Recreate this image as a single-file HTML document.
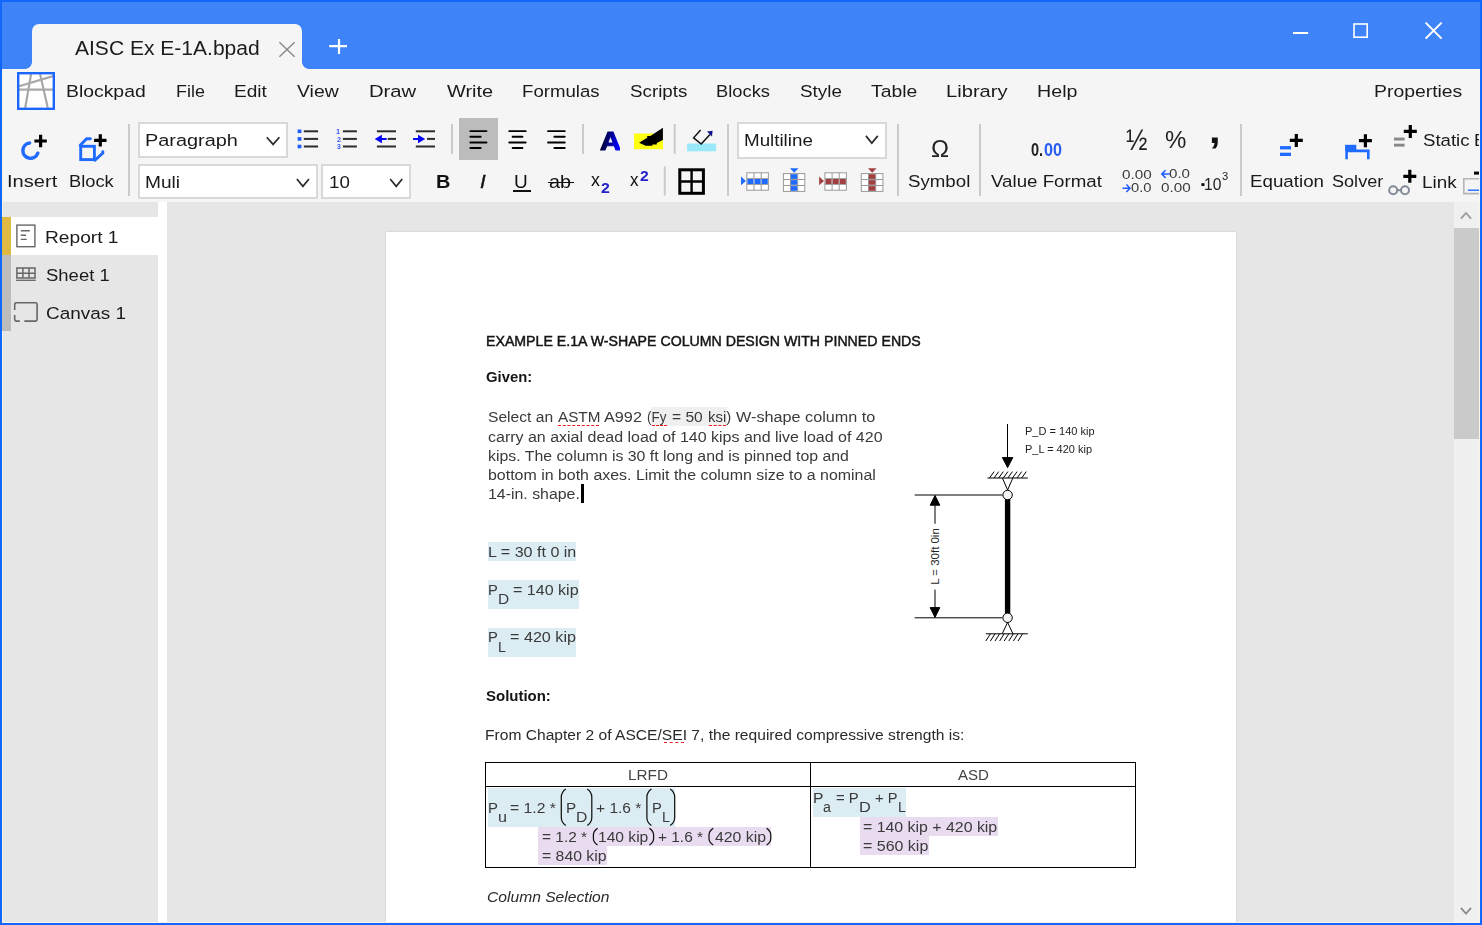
<!DOCTYPE html>
<html lang="en"><head><meta charset="utf-8"><title>AISC Ex E-1A.bpad - Blockpad</title>
<style>
html,body{margin:0;padding:0}
body{width:1482px;height:925px;overflow:hidden;position:relative;background:#e6e6e6;font-family:"Liberation Sans",sans-serif;}
.t{position:absolute;white-space:nowrap;line-height:1;transform-origin:0 0;}
.frame{position:absolute;left:0;top:0;width:1478px;height:921px;border:2px solid #1166fb;z-index:50;pointer-events:none}
.cream{position:absolute;background:#fbf3e4;z-index:49}
.titlebar{position:absolute;left:0;top:0;width:1482px;height:69px;background:#3f83f8}
.tab{position:absolute;left:32px;top:24px;width:270px;height:46px;background:#f5f5f5;border-radius:7px 7px 0 0}
.tab .cl,.tab .cr{position:absolute;bottom:1px;width:7px;height:7px}
.tab .cl{left:-7px;background:radial-gradient(circle at 0 0,rgba(245,245,245,0) 6.5px,#f5f5f5 7.2px)}
.tab .cr{right:-7px;background:radial-gradient(circle at 100% 0,rgba(245,245,245,0) 6.5px,#f5f5f5 7.2px)}
.ribbon{position:absolute;left:0;top:69px;width:1482px;height:133px;background:#f5f5f5}
.logo{position:absolute;left:17px;top:72px;width:38px;height:38px;line-height:0}
.combo{position:absolute;box-sizing:border-box;background:#fff;border:2px solid #d9d9d9}
.selbtn{position:absolute;left:459px;top:118px;width:39px;height:42px;background:#bcbcbc}
.ln{position:absolute;background:#111}
.clipr{position:absolute;left:0;top:0;width:1479px;height:202px;overflow:hidden}
.sidebar{position:absolute;left:0;top:202px;width:158px;height:723px;background:#e6e6e6}
.splitter{position:absolute;left:158px;top:202px;width:9px;height:723px;background:#fff}
.siderow{position:absolute;left:11px;top:217px;width:147px;height:38px;background:#fff}
.ybar{position:absolute;left:2px;top:217px;width:9px;height:38px;background:#e1b941}
.gbar{position:absolute;left:2px;top:255px;width:9px;height:76px;background:#bcbcbc}
.vscroll{position:absolute;left:1454px;top:202px;width:26px;height:721px;background:#f0f0f0}
.thumb{position:absolute;left:0;top:26px;width:26px;height:211px;background:#cacaca}
.page{position:absolute;left:386px;top:232px;width:850px;height:693px;background:#fff;box-shadow:0 0 1.5px rgba(0,0,0,.18)}
.fbg{position:absolute}
.caret{position:absolute;left:580.5px;top:484px;width:3px;height:18.5px;background:#000}
.sq{position:absolute;height:0;border-top:1.3px dashed #ee1c1c}
.tbl{position:absolute;left:485px;top:762px;width:651px;height:106px;box-sizing:border-box;border:1px solid #000}
.tbl .tv{position:absolute;left:324px;top:0;width:1px;height:100%;background:#000}
.tbl .th{position:absolute;left:0;top:23px;width:100%;height:1px;background:#000}
svg.ov{position:absolute;left:0;top:0;z-index:10}
</style></head>
<body>
<div class="sidebar"></div><div class="splitter"></div>
<div class="cream" style="left:2px;top:202px;width:1px;height:721px;z-index:auto"></div>
<div class="siderow"></div><div class="ybar"></div><div class="gbar"></div>
<span class="t" style="left:44.90px;top:229px;font-size:17.33px;transform:scaleX(1.1054);color:#1a1a1a;">Report 1</span>
<span class="t" style="left:45.82px;top:267px;font-size:17.33px;transform:scaleX(1.0667);color:#1a1a1a;">Sheet 1</span>
<span class="t" style="left:45.51px;top:305px;font-size:17.33px;transform:scaleX(1.0935);color:#1a1a1a;">Canvas 1</span>
<div class="vscroll"><div class="thumb"></div></div>
<div class="page"></div>
<span class="t" style="left:485.55px;top:335px;font-size:13.89px;transform:scaleX(1.0204);color:#151515;-webkit-text-stroke:0.45px #151515;">EXAMPLE E.1A W-SHAPE COLUMN DESIGN WITH PINNED ENDS</span>
<span class="t" style="left:486.10px;top:371px;font-size:13.89px;transform:scaleX(1.0690);font-weight:700;color:#151515;">Given:</span>
<div class="fbg" style="left:651px;top:407px;width:76px;height:19px;background:#efefef"></div>
<span class="t" style="left:488.10px;top:411px;font-size:13.89px;transform:scaleX(1.1251);color:#3a3a3a;">Select an</span>
<span class="t" style="left:558.10px;top:411px;font-size:13.89px;transform:scaleX(1.1001);color:#3a3a3a;">ASTM</span>
<span class="t" style="left:604.20px;top:411px;font-size:13.89px;transform:scaleX(1.1707);color:#3a3a3a;">A992</span>
<span class="t" style="left:646.91px;top:411px;font-size:13.89px;transform:scaleX(0.9670);color:#3a3a3a;">(Fy</span>
<span class="t" style="left:672.30px;top:411px;font-size:13.89px;transform:scaleX(1.1235);color:#3a3a3a;">= 50</span>
<span class="t" style="left:707.96px;top:411px;font-size:13.89px;transform:scaleX(1.0747);color:#3a3a3a;">ksi)</span>
<span class="t" style="left:736.20px;top:411px;font-size:13.89px;transform:scaleX(1.1677);color:#3a3a3a;">W-shape column to</span>
<span class="t" style="left:488.15px;top:431px;font-size:13.89px;transform:scaleX(1.1520);color:#3a3a3a;">carry an axial dead load of 140 kips and live load of 420</span>
<span class="t" style="left:487.80px;top:450px;font-size:13.89px;transform:scaleX(1.1421);color:#3a3a3a;">kips. The column is 30 ft long and is pinned top and</span>
<span class="t" style="left:487.80px;top:469px;font-size:13.89px;transform:scaleX(1.1481);color:#3a3a3a;">bottom in both axes. Limit the column size to a nominal</span>
<span class="t" style="left:488.45px;top:488px;font-size:13.89px;transform:scaleX(1.1451);color:#3a3a3a;">14-in. shape.</span>
<div class="caret"></div>
<div class="sq" style="left:557.9px;top:424.6px;width:41.4px"></div>
<div class="sq" style="left:651.9px;top:424.6px;width:15.1px"></div>
<div class="sq" style="left:708.8px;top:424.6px;width:17.2px"></div>
<div class="fbg" style="left:488px;top:542px;width:88px;height:19px;background:#dcecf3"></div>
<span class="t" style="left:487.60px;top:546px;font-size:13.89px;transform:scaleX(1.1582);color:#3a3a3a;">L = 30 ft 0 in</span>
<div class="fbg" style="left:488px;top:580px;width:91px;height:29px;background:#dcecf3"></div>
<span class="t" style="left:488.01px;top:584px;font-size:13.89px;transform:scaleX(1.0622);color:#3a3a3a;">P</span>
<span class="t" style="left:498.35px;top:593px;font-size:13.89px;transform:scaleX(1.1152);color:#3a3a3a;">D</span>
<span class="t" style="left:512.98px;top:584px;font-size:13.89px;transform:scaleX(1.1565);color:#3a3a3a;">= 140 kip</span>
<div class="fbg" style="left:488px;top:628px;width:88px;height:29px;background:#dcecf3"></div>
<span class="t" style="left:488.01px;top:631px;font-size:13.89px;transform:scaleX(1.0622);color:#3a3a3a;">P</span>
<span class="t" style="left:498.44px;top:641px;font-size:13.89px;transform:scaleX(1.0343);color:#3a3a3a;">L</span>
<span class="t" style="left:509.77px;top:631px;font-size:13.89px;transform:scaleX(1.1637);color:#3a3a3a;">= 420 kip</span>
<span class="t" style="left:486.30px;top:690px;font-size:13.89px;transform:scaleX(1.0790);font-weight:700;color:#151515;">Solution:</span>
<span class="t" style="left:485.44px;top:729px;font-size:13.89px;transform:scaleX(1.1241);color:#2a2a2a;">From Chapter 2 of ASCE/SEI 7, the required compressive strength is:</span>
<div class="sq" style="left:663.9px;top:742.4px;width:20.2px"></div>
<div class="tbl"><div class="tv"></div><div class="th"></div></div>
<span class="t" style="left:628.16px;top:769px;font-size:13.89px;transform:scaleX(1.1018);color:#444;">LRFD</span>
<span class="t" style="left:958.20px;top:769px;font-size:13.89px;transform:scaleX(1.0859);color:#444;">ASD</span>
<div class="fbg" style="left:488px;top:788.4px;width:187px;height:38.3px;background:#dcecf3"></div>
<div class="fbg" style="left:538.3px;top:826.7px;width:232.8px;height:19.1px;background:#e9dcf1"></div>
<div class="fbg" style="left:538.3px;top:845.7px;width:68.7px;height:19px;background:#e9dcf1"></div>
<span class="t" style="left:488.09px;top:802px;font-size:13.89px;transform:scaleX(1.0756);color:#3a3a3a;">P</span>
<span class="t" style="left:498.38px;top:811px;font-size:13.89px;transform:scaleX(1.1621);color:#3a3a3a;">u</span>
<span class="t" style="left:510.19px;top:802px;font-size:13.89px;transform:scaleX(1.1342);color:#3a3a3a;">= 1.2 *</span>
<span class="t" style="left:565.56px;top:802px;font-size:13.89px;transform:scaleX(1.1025);color:#3a3a3a;">P</span>
<span class="t" style="left:575.93px;top:811px;font-size:13.89px;transform:scaleX(1.1273);color:#3a3a3a;">D</span>
<span class="t" style="left:596.30px;top:802px;font-size:13.89px;transform:scaleX(1.1191);color:#3a3a3a;">+ 1.6 *</span>
<span class="t" style="left:651.91px;top:802px;font-size:13.89px;transform:scaleX(1.0622);color:#3a3a3a;">P</span>
<span class="t" style="left:662.04px;top:811px;font-size:13.89px;transform:scaleX(1.0343);color:#3a3a3a;">L</span>
<span class="t" style="left:541.90px;top:831px;font-size:13.89px;transform:scaleX(1.1141);color:#3a3a3a;">= 1.2 *</span>
<span class="t" style="left:598.28px;top:831px;font-size:13.89px;transform:scaleX(1.1237);color:#3a3a3a;">140 kip</span>
<span class="t" style="left:658.11px;top:831px;font-size:13.89px;transform:scaleX(1.1116);color:#3a3a3a;">+ 1.6 *</span>
<span class="t" style="left:714.54px;top:831px;font-size:13.89px;transform:scaleX(1.1402);color:#3a3a3a;">420 kip</span>
<span class="t" style="left:541.89px;top:850px;font-size:13.89px;transform:scaleX(1.1386);color:#3a3a3a;">= 840 kip</span>
<div class="fbg" style="left:813px;top:788.4px;width:93px;height:28.2px;background:#dcecf3"></div>
<div class="fbg" style="left:860px;top:816.6px;width:137.7px;height:19.3px;background:#e9dcf1"></div>
<div class="fbg" style="left:860px;top:835.8px;width:69px;height:19px;background:#e9dcf1"></div>
<span class="t" style="left:812.73px;top:792px;font-size:13.89px;transform:scaleX(1.1294);color:#3a3a3a;">P</span>
<span class="t" style="left:823.42px;top:801px;font-size:13.89px;transform:scaleX(1.0296);color:#3a3a3a;">a</span>
<span class="t" style="left:836.43px;top:792px;font-size:13.89px;transform:scaleX(1.0750);color:#3a3a3a;">= P</span>
<span class="t" style="left:859.38px;top:801px;font-size:13.89px;transform:scaleX(1.1758);color:#3a3a3a;">D</span>
<span class="t" style="left:875.04px;top:792px;font-size:13.89px;transform:scaleX(1.0599);color:#3a3a3a;">+ P</span>
<span class="t" style="left:898.05px;top:801px;font-size:13.89px;transform:scaleX(1.0182);color:#3a3a3a;">L</span>
<span class="t" style="left:863.48px;top:821px;font-size:13.89px;transform:scaleX(1.1444);color:#3a3a3a;">= 140 kip + 420 kip</span>
<span class="t" style="left:863.48px;top:840px;font-size:13.89px;transform:scaleX(1.1511);color:#3a3a3a;">= 560 kip</span>
<span class="t" style="left:486.96px;top:891px;font-size:13.89px;transform:scaleX(1.1264);font-style:italic;color:#2a2a2a;">Column Selection</span>
<span class="t" style="left:1024.63px;top:427px;font-size:10.3px;transform:scaleX(1.0712);color:#222;">P_D = 140 kip</span>
<span class="t" style="left:1024.63px;top:445px;font-size:10.3px;transform:scaleX(1.0653);color:#222;">P_L = 420 kip</span>
<div class="titlebar"></div>
<div class="tab"><i class="cl"></i><i class="cr"></i></div>
<span class="t" style="left:74.70px;top:38px;font-size:20px;transform:scaleX(1.0514);color:#1c1c1c;">AISC Ex E-1A.bpad</span>
<div class="ribbon"></div>
<div class="cream" style="left:2px;top:69px;width:1px;height:133px;z-index:auto"></div>
<div class="logo"><svg width="38" height="38" viewBox="0 0 38 38"><rect x="0" y="0" width="38" height="38" fill="#fff"/><g stroke="#a8a8a8" stroke-width="2.2" fill="none"><path d="M2 14.2 L36 4.1"/><path d="M2 17.6 L36 17.6"/><path d="M14.1 2 L8.2 36"/><path d="M23.1 2 L30.8 36"/></g><rect x="1.2" y="1.2" width="35.6" height="35.6" fill="none" stroke="#1a66ff" stroke-width="2.4"/></svg></div>
<nav class="menubar">
<span class="t" style="left:65.99px;top:83px;font-size:17.33px;transform:scaleX(1.1180);color:#1a1a1a;">Blockpad</span>
<span class="t" style="left:176.10px;top:83px;font-size:17.33px;transform:scaleX(1.0360);color:#1a1a1a;">File</span>
<span class="t" style="left:234.11px;top:83px;font-size:17.33px;transform:scaleX(1.0992);color:#1a1a1a;">Edit</span>
<span class="t" style="left:297.30px;top:83px;font-size:17.33px;transform:scaleX(1.1185);color:#1a1a1a;">View</span>
<span class="t" style="left:368.92px;top:83px;font-size:17.33px;transform:scaleX(1.1680);color:#1a1a1a;">Draw</span>
<span class="t" style="left:447.40px;top:83px;font-size:17.33px;transform:scaleX(1.1493);color:#1a1a1a;">Write</span>
<span class="t" style="left:522.24px;top:83px;font-size:17.33px;transform:scaleX(1.0750);color:#1a1a1a;">Formulas</span>
<span class="t" style="left:629.81px;top:83px;font-size:17.33px;transform:scaleX(1.0833);color:#1a1a1a;">Scripts</span>
<span class="t" style="left:716.17px;top:83px;font-size:17.33px;transform:scaleX(1.0581);color:#1a1a1a;">Blocks</span>
<span class="t" style="left:799.71px;top:83px;font-size:17.33px;transform:scaleX(1.0863);color:#1a1a1a;">Style</span>
<span class="t" style="left:871.20px;top:83px;font-size:17.33px;transform:scaleX(1.1173);color:#1a1a1a;">Table</span>
<span class="t" style="left:945.83px;top:83px;font-size:17.33px;transform:scaleX(1.1624);color:#1a1a1a;">Library</span>
<span class="t" style="left:1036.96px;top:83px;font-size:17.33px;transform:scaleX(1.1344);color:#1a1a1a;">Help</span>
<span class="t" style="left:1373.99px;top:83px;font-size:17.33px;transform:scaleX(1.1182);color:#1a1a1a;">Properties</span>
</nav>
<div class="toolbar">
<span class="t" style="left:6.93px;top:173px;font-size:17.33px;transform:scaleX(1.1606);color:#1a1a1a;">Insert</span>
<span class="t" style="left:69.47px;top:173px;font-size:17.33px;transform:scaleX(1.0534);color:#1a1a1a;">Block</span>
<div class="combo" style="left:138px;top:122px;width:150px;height:36px"></div>
<div class="combo" style="left:138px;top:164px;width:180px;height:35px"></div>
<div class="combo" style="left:321px;top:164px;width:90px;height:35px"></div>
<div class="combo" style="left:737px;top:122px;width:150px;height:37px"></div>
<span class="t" style="left:144.65px;top:132px;font-size:17.33px;transform:scaleX(1.1475);color:#1a1a1a;">Paragraph</span>
<span class="t" style="left:144.71px;top:174px;font-size:17.33px;transform:scaleX(1.1032);color:#1a1a1a;">Muli</span>
<span class="t" style="left:328.83px;top:174px;font-size:17.33px;transform:scaleX(1.0810);color:#1a1a1a;">10</span>
<span class="t" style="left:744.13px;top:132px;font-size:17.33px;transform:scaleX(1.0828);color:#1a1a1a;">Multiline</span>
<span class="t" style="left:336.48px;top:128px;font-size:7.6px;transform:scaleX(0.9655);font-weight:700;color:#3a55ff;">1</span>
<span class="t" style="left:336.66px;top:136px;font-size:7.6px;transform:scaleX(0.9492);font-weight:700;color:#3a55ff;">2</span>
<span class="t" style="left:336.79px;top:143px;font-size:7.6px;transform:scaleX(0.9032);font-weight:700;color:#3a55ff;">3</span>
<div class="selbtn"></div>
<span class="t" style="left:435.76px;top:173px;font-size:18.4px;transform:scaleX(1.0783);font-weight:700;color:#111;">B</span>
<span class="t" style="left:480.06px;top:173px;font-size:18.4px;transform:scaleX(1.1087);font-style:italic;color:#111;-webkit-text-stroke:0.4px #111;">I</span>
<span class="t" style="left:514.11px;top:173px;font-size:18.4px;transform:scaleX(1.0343);color:#111;">U</span>
<div class="ln" style="left:512.6px;top:190.3px;width:18px;height:1.9px"></div>
<span class="t" style="left:549.18px;top:173px;font-size:18.4px;transform:scaleX(1.0760);color:#111;">ab</span>
<div class="ln" style="left:547.7px;top:181.6px;width:26px;height:1.6px"></div>
<span class="t" style="left:590.50px;top:171px;font-size:18.4px;transform:scaleX(0.9674);color:#111;">x</span>
<span class="t" style="left:600.75px;top:181px;font-size:14.6px;transform:scaleX(1.0903);font-weight:700;color:#2323c8;">2</span>
<span class="t" style="left:629.70px;top:171px;font-size:18.4px;transform:scaleX(0.9239);color:#111;">x</span>
<span class="t" style="left:640.16px;top:169px;font-size:14.6px;transform:scaleX(1.0761);font-weight:700;color:#2323c8;">2</span>
<span class="t" style="left:599.75px;top:129px;font-size:25.6px;transform:scaleX(1.1364);font-weight:700;color:transparent;background:linear-gradient(100deg,#00002a 15%,#0000ff 85%);-webkit-background-clip:text;background-clip:text;-webkit-text-stroke:1.1px transparent;">A</span>
<span class="t" style="left:930.65px;top:138px;font-size:23.5px;transform:scaleX(1.0275);color:#222;">Ω</span>
<span class="t" style="left:908.12px;top:173px;font-size:17.33px;transform:scaleX(1.0784);color:#1a1a1a;">Symbol</span>
<span class="t" style="left:1031.45px;top:141px;font-size:18.6px;transform:scaleX(0.7808);font-weight:700;color:#222;">0.</span>
<span class="t" style="left:1043.70px;top:141px;font-size:18.6px;transform:scaleX(0.8680);font-weight:700;color:#2a5cf0;">00</span>
<span class="t" style="left:990.80px;top:173px;font-size:17.33px;transform:scaleX(1.0798);color:#1a1a1a;">Value Format</span>
<span class="t" style="left:1126.20px;top:126px;font-size:29px;transform:scaleX(0.8871);color:#222;">½</span>
<span class="t" style="left:1164.75px;top:128px;font-size:24px;transform:scaleX(1.0013);color:#222;">%</span>
<span class="t" style="left:1208.70px;top:112px;font-size:37px;transform:scaleX(1.1243);font-weight:700;color:#111;">,</span>
<span class="t" style="left:1121.74px;top:169px;font-size:12px;transform:scaleX(1.2714);color:#3a3a3a;">0.00</span>
<span class="t" style="left:1130.96px;top:182px;font-size:12px;transform:scaleX(1.2263);color:#3a3a3a;">0.0</span>
<span class="t" style="left:1169.25px;top:168px;font-size:12px;transform:scaleX(1.2579);color:#3a3a3a;">0.0</span>
<span class="t" style="left:1160.54px;top:182px;font-size:12px;transform:scaleX(1.2714);color:#3a3a3a;">0.00</span>
<span class="t" style="left:1204.24px;top:177px;font-size:16px;transform:scaleX(0.9736);color:#222;">10</span>
<span class="t" style="left:1222.33px;top:171px;font-size:11.3px;transform:scaleX(0.9931);color:#222;">3</span>
<span class="t" style="left:1250.34px;top:173px;font-size:17.33px;transform:scaleX(1.0819);color:#1a1a1a;">Equation</span>
<span class="t" style="left:1332.03px;top:173px;font-size:17.33px;transform:scaleX(1.0434);color:#1a1a1a;">Solver</span>
<span class="t" style="left:1423.12px;top:132px;font-size:17.33px;transform:scaleX(1.0745);color:#1a1a1a;">Static</span>
<div class="clipr"><span class="t" style="left:1473.69px;top:132px;font-size:17.33px;transform:scaleX(1.0446);color:#1a1a1a;">E</span></div>
<span class="t" style="left:1422.22px;top:174px;font-size:17.33px;transform:scaleX(1.0909);color:#1a1a1a;">Link</span>
</div>
<svg class="ov" width="1482" height="925" viewBox="0 0 1482 925" font-family="Liberation Sans, sans-serif">
<g stroke="#fff" fill="none">
<path d="M1293 33 H1308.2" stroke-width="2"/>
<rect x="1354" y="24" width="13.2" height="13.2" stroke-width="1.6"/>
<path d="M1425.6 22.6 L1441.6 38.6 M1441.6 22.6 L1425.6 38.6" stroke-width="2"/>
<path d="M329.2 46.1 H347 M339 39 V54.1" stroke-width="2.2"/>
</g>
<path d="M279.4 42.2 L294.6 56.8 M294.6 42.2 L279.4 56.8" stroke="#8a8a8a" stroke-width="1.5" fill="none"/>
<rect x="128.0" y="124.0" width="2" height="72.0" fill="#cbcbcb"/>
<rect x="451.0" y="124.0" width="2" height="30.0" fill="#cbcbcb"/>
<rect x="582.0" y="124.0" width="2" height="30.0" fill="#cbcbcb"/>
<rect x="673.7" y="124.0" width="2" height="30.0" fill="#cbcbcb"/>
<rect x="727.0" y="124.0" width="2" height="72.0" fill="#cbcbcb"/>
<rect x="663.8" y="166.4" width="2" height="29.2" fill="#cbcbcb"/>
<rect x="897.0" y="124.0" width="2" height="72.0" fill="#cbcbcb"/>
<rect x="979.0" y="124.0" width="2" height="72.0" fill="#cbcbcb"/>
<rect x="1240.0" y="124.0" width="2" height="72.0" fill="#cbcbcb"/>
<path d="M266.8 137.3 L273.1 144.4 L279.4 137.3" stroke="#2b2b2b" stroke-width="1.7" fill="none"/>
<path d="M296.9 179.0 L302.9 186.3 L309.0 179.0" stroke="#2b2b2b" stroke-width="1.7" fill="none"/>
<path d="M390.2 179.0 L396.2 186.3 L402.3 179.0" stroke="#2b2b2b" stroke-width="1.7" fill="none"/>
<path d="M865.9 135.9 L871.8 143.1 L877.8 135.9" stroke="#2b2b2b" stroke-width="1.7" fill="none"/>
<path d="M29.6 142.9 A7.7 7.7 0 1 0 37.8 153.2" stroke="#1f6bff" stroke-width="3.5" fill="none" stroke-linecap="round"/>
<path d="M34.4 141 H46.8 M40.6 134.8 V147.2" stroke="#000" stroke-width="3.2"/>
<g stroke="#1f6bff" stroke-width="2.9" fill="none" stroke-linejoin="miter"><rect x="80.7" y="146.3" width="13.7" height="13.3"/><path d="M80.2 145.2 L86.6 138.7 H90.4" stroke-linecap="round"/><path d="M95 160.2 L102.8 153.2 V151.6" stroke-linecap="round"/></g>
<path d="M94.1 140.4 H106.5 M100.3 134.2 V146.6" stroke="#000" stroke-width="3.2"/>
<rect x="297.6" y="129.5" width="3.8" height="3.6" fill="#1f5bff"/>
<rect x="303.8" y="130.3" width="14.3" height="2" fill="#2d2d2d"/>
<rect x="342.9" y="130.3" width="14" height="2" fill="#2d2d2d"/>
<rect x="297.6" y="137.1" width="3.8" height="3.6" fill="#1f5bff"/>
<rect x="303.8" y="137.9" width="14.3" height="2" fill="#2d2d2d"/>
<rect x="342.9" y="137.9" width="14" height="2" fill="#2d2d2d"/>
<rect x="297.6" y="144.7" width="3.8" height="3.6" fill="#1f5bff"/>
<rect x="303.8" y="145.5" width="14.3" height="2" fill="#2d2d2d"/>
<rect x="342.9" y="145.5" width="14" height="2" fill="#2d2d2d"/>
<rect x="376.9" y="130.3" width="19.1" height="2" fill="#2d2d2d"/>
<rect x="415.8" y="130.3" width="19.2" height="2" fill="#2d2d2d"/>
<rect x="376.9" y="145.5" width="19.1" height="2" fill="#2d2d2d"/>
<rect x="415.8" y="145.5" width="19.2" height="2" fill="#2d2d2d"/>
<rect x="387.7" y="137.9" width="8.3" height="2" fill="#2d2d2d"/>
<rect x="427" y="137.9" width="8" height="2" fill="#2d2d2d"/>
<path d="M374.7 139 L381.9 134.8 V138 H386.6 V140 H381.9 V143.2 Z" fill="#0000ff"/>
<path d="M425.2 139 L418 134.8 V138 H413.1 V140 H418 V143.2 Z" fill="#0000ff"/>
<rect x="469.4" y="130.2" width="18.0" height="1.9" rx="0.95" fill="#000"/>
<rect x="508.3" y="130.2" width="18.3" height="1.9" rx="0.95" fill="#000"/>
<rect x="547.1" y="130.2" width="18.6" height="1.9" rx="0.95" fill="#000"/>
<rect x="469.4" y="135.8" width="12.2" height="1.9" rx="0.95" fill="#000"/>
<rect x="511.7" y="135.8" width="11.7" height="1.9" rx="0.95" fill="#000"/>
<rect x="553.4" y="135.8" width="12.3" height="1.9" rx="0.95" fill="#000"/>
<rect x="469.4" y="141.5" width="18.0" height="1.9" rx="0.95" fill="#000"/>
<rect x="508.3" y="141.5" width="18.3" height="1.9" rx="0.95" fill="#000"/>
<rect x="547.1" y="141.5" width="18.6" height="1.9" rx="0.95" fill="#000"/>
<rect x="469.4" y="147.0" width="12.2" height="1.9" rx="0.95" fill="#000"/>
<rect x="511.7" y="147.0" width="11.7" height="1.9" rx="0.95" fill="#000"/>
<rect x="553.4" y="147.0" width="12.3" height="1.9" rx="0.95" fill="#000"/>
<rect x="634" y="133.5" width="29" height="15.7" fill="#ffff14"/>
<path d="M639.1 142.8 L647.2 137.8 V135.9 L650.4 135.9 L662.9 127.8 V140 L656.8 143 V144.4 L652.4 144.4 V145.8 L645.6 145.8 Z" fill="#000"/>
<rect x="687.1" y="143.5" width="29" height="7.8" fill="#99e9fb"/>
<path d="M700.6 129.9 L693.6 137.8 L701.2 144 L710 134.4" stroke="#111" stroke-width="1.5" fill="none"/>
<path d="M712.6 130.8 L707 131.6 L712 136.4 Z" fill="#10108a"/>
<rect x="679.8" y="169.8" width="23.6" height="23.5" stroke="#000" stroke-width="3" fill="none"/>
<path d="M691.6 169 V194 M679 181.5 H704" stroke="#000" stroke-width="2.4"/>
<rect x="746.8" y="172.8" width="21.6" height="17.4" fill="#fff" stroke="#999" stroke-width="1"/>
<path d="M754.0 172.8 V190.2 M746.8 178.6 H768.4" stroke="#999" stroke-width="1"/>
<path d="M761.2 172.8 V190.2 M746.8 184.4 H768.4" stroke="#999" stroke-width="1"/>
<rect x="747.4" y="179.0" width="6.0" height="5.0" fill="#1f6bff"/>
<rect x="754.6" y="179.0" width="6.0" height="5.0" fill="#1f6bff"/>
<rect x="761.8" y="179.0" width="6.0" height="5.0" fill="#1f6bff"/>
<path d="M741 176.5 L745.9 180.9 L741 185.3 Z" fill="#1f6bff"/>
<rect x="783.4" y="173.6" width="21.4" height="17.8" fill="#fff" stroke="#999" stroke-width="1"/>
<path d="M790.5 173.6 V191.4 M783.4 179.5 H804.8" stroke="#999" stroke-width="1"/>
<path d="M797.7 173.6 V191.4 M783.4 185.5 H804.8" stroke="#999" stroke-width="1"/>
<rect x="790.9" y="174.2" width="6.3" height="4.7" fill="#1f6bff"/>
<rect x="790.9" y="180.1" width="6.3" height="4.7" fill="#1f6bff"/>
<rect x="790.9" y="186.1" width="6.3" height="4.7" fill="#1f6bff"/>
<path d="M790 168.2 H798.5 L794.2 172.8 Z" fill="#1f6bff"/>
<rect x="824.9" y="172.8" width="21.5" height="17.4" fill="#fff" stroke="#999" stroke-width="1"/>
<path d="M832.1 172.8 V190.2 M824.9 178.6 H846.4" stroke="#999" stroke-width="1"/>
<path d="M839.2 172.8 V190.2 M824.9 184.4 H846.4" stroke="#999" stroke-width="1"/>
<rect x="825.5" y="179.0" width="6.0" height="5.0" fill="#a04040"/>
<rect x="832.7" y="179.0" width="6.0" height="5.0" fill="#a04040"/>
<rect x="839.8" y="179.0" width="6.0" height="5.0" fill="#a04040"/>
<path d="M819.1 176.5 L824 180.9 L819.1 185.3 Z" fill="#a04040"/>
<rect x="861.3" y="173.6" width="21.6" height="17.8" fill="#fff" stroke="#999" stroke-width="1"/>
<path d="M868.5 173.6 V191.4 M861.3 179.5 H882.9" stroke="#999" stroke-width="1"/>
<path d="M875.7 173.6 V191.4 M861.3 185.5 H882.9" stroke="#999" stroke-width="1"/>
<rect x="868.9" y="174.2" width="6.4" height="4.7" fill="#a04040"/>
<rect x="868.9" y="180.1" width="6.4" height="4.7" fill="#a04040"/>
<rect x="868.9" y="186.1" width="6.4" height="4.7" fill="#a04040"/>
<path d="M868 168.2 H876.5 L872.2 172.8 Z" fill="#a04040"/>
<path d="M1122.5 188.3 H1129.8 M1126.4 184.6 L1130 188.3 L1126.4 192" stroke="#1f5bff" stroke-width="1.5" fill="none"/>
<path d="M1169.6 174.1 H1162 M1165.6 170.3 L1161.8 174.1 L1165.6 177.9" stroke="#1f5bff" stroke-width="1.5" fill="none"/>
<rect x="1201.4" y="183.2" width="3.1" height="2.8" fill="#111"/>
<rect x="1280" y="146.1" width="11" height="3.3" fill="#1f6bff"/><rect x="1280" y="152.7" width="11" height="3.3" fill="#1f6bff"/>
<path d="M1289.8 140.4 H1302.8 M1296.3 133.9 V146.9" stroke="#000" stroke-width="3.2"/>
<rect x="1345.3" y="144.8" width="11" height="6.4" fill="#1f6bff"/>
<path d="M1346.6 145 V159.3 M1345.3 150.9 H1369.6 M1368.3 150 V159.3" stroke="#1f6bff" stroke-width="2.6" fill="none"/>
<path d="M1358.9 140.7 H1371.9 M1365.4 134.2 V147.2" stroke="#000" stroke-width="3.2"/>
<rect x="1394" y="137.6" width="10.6" height="2.9" fill="#888"/><rect x="1394" y="143.7" width="10.6" height="2.9" fill="#888"/>
<path d="M1403.8 131.4 H1416.8 M1410.3 124.9 V137.9" stroke="#000" stroke-width="3.2"/>
<g stroke="#838a98" stroke-width="2" fill="none"><circle cx="1393.2" cy="190.2" r="4"/><circle cx="1405" cy="190.2" r="4"/><path d="M1397 190.2 H1401"/></g>
<path d="M1403.3 176.3 H1416.3 M1409.8 169.8 V182.8" stroke="#000" stroke-width="3.2"/>
<path d="M1479 178.8 H1463.8 V193.6 H1479" stroke="#b5b5b5" stroke-width="1.6" fill="none"/><path d="M1467.8 190.2 H1479" stroke="#1f6bff" stroke-width="1.4"/>
<rect x="1474" y="171.6" width="5" height="3" fill="#000"/>
<g stroke="#666" stroke-width="1.4" fill="none">
<rect x="16.9" y="225.1" width="18" height="21.6"/>
<path d="M20.8 230.7 H29.8 M20.8 235.2 H26 M20.8 239.4 H26.7"/>
<path d="M16.1 268 H35.8 M16.9 273.2 H35 M16.1 277.9 H35.8 M16.9 268 V278.4 M22.9 268 V278.4 M29 268 V278.4 M35 268 V278.4" stroke-width="1.5"/>
<path d="M16.1 280.3 H35.8" stroke-width="1.3"/>
<path d="M14.7 309.9 V304.3 Q14.7 302.8 16.2 302.8 H35.6 Q37.1 302.8 37.1 304.3 V319.6 Q37.1 321.1 35.6 321.1 H24.3 M19.8 321.1 H16.2 Q14.7 321.1 14.7 319.6 V314.9" stroke-width="1.6"/>
</g>
<path d="M1460.9 218.6 L1466 213 L1471.1 218.6" stroke="#9a9a9a" stroke-width="1.8" fill="none"/>
<path d="M1460.9 907.8 L1466 913.6 L1471.1 907.8" stroke="#8c8c8c" stroke-width="1.8" fill="none"/>
<g stroke="#111" stroke-width="1.25" fill="none">
<path d="M565.8 789.1 Q561.3 792.3 561.3 797.2 V817.4 Q561.3 822.3 565.8 825.5"/>
<path d="M651.4 789.1 Q646.9 792.3 646.9 797.2 V817.4 Q646.9 822.3 651.4 825.5"/>
<path d="M587.3 789.1 Q591.8 792.3 591.8 797.2 V817.4 Q591.8 822.3 587.3 825.5"/>
<path d="M670.2 789.1 Q674.7 792.3 674.7 797.2 V817.4 Q674.7 822.3 670.2 825.5"/>
<path d="M597.6 828.3 Q593.4 831.2 593.4 835 V838.4 Q593.4 842.2 597.6 845"/>
<path d="M713.2 828.3 Q709.0 831.2 709.0 835 V838.4 Q709.0 842.2 713.2 845"/>
<path d="M649.4 828.3 Q653.6 831.2 653.6 835 V838.4 Q653.6 842.2 649.4 845"/>
<path d="M766.6 828.3 Q770.8 831.2 770.8 835 V838.4 Q770.8 842.2 766.6 845"/>
</g>
<g stroke="#000" stroke-width="1" fill="none">
<path d="M1007.5 424 V458"/>
<path d="M1002.4 457.6 H1012.8 L1007.6 467.6 Z" fill="#000"/>
<path d="M987.5 478 H1027.8"/>
<path d="M989.5 478 L994.1 471.6"/>
<path d="M994.1 478 L998.7 471.6"/>
<path d="M998.7 478 L1003.3 471.6"/>
<path d="M1003.3 478 L1007.9 471.6"/>
<path d="M1007.9 478 L1012.5 471.6"/>
<path d="M1012.5 478 L1017.1 471.6"/>
<path d="M1017.1 478 L1021.7 471.6"/>
<path d="M1021.7 478 L1026.3 471.6"/>
<path d="M1002.4 478 L1007.6 490 L1012.8 478"/>
<path d="M914.7 495 H1002.5 M914.7 617.8 H1002.5"/>
<path d="M935 505 V523.8 M935 589.6 V607.6"/>
<path d="M935 495.4 L930.2 505.2 H939.8 Z M935 617.4 L930.2 607.6 H939.8 Z" fill="#000"/>
<path d="M1007.6 495 V617.8" stroke-width="5.4"/>
<circle cx="1007.6" cy="495" r="4.7" fill="#f4f4f4"/><circle cx="1007.6" cy="617.8" r="4.7" fill="#f4f4f4"/>
<path d="M1002.2 633.8 L1007.6 622.4 L1013 633.8"/>
<path d="M985.8 633.8 H1027.8"/>
<path d="M990.4 633.8 L985.8 641"/>
<path d="M995.0 633.8 L990.4 641"/>
<path d="M999.6 633.8 L995.0 641"/>
<path d="M1004.2 633.8 L999.6 641"/>
<path d="M1008.8 633.8 L1004.2 641"/>
<path d="M1013.4 633.8 L1008.8 641"/>
<path d="M1018.0 633.8 L1013.4 641"/>
<path d="M1022.6 633.8 L1018.0 641"/>
</g>
<text transform="translate(938.6 556.5) rotate(-90)" text-anchor="middle" font-size="10" fill="#222" textLength="56.5" lengthAdjust="spacingAndGlyphs">L = 30ft 0in</text>
</svg>
<div class="cream" style="left:1479px;top:202px;width:1px;height:721px"></div>
<div class="cream" style="left:2px;top:922px;width:1478px;height:1px"></div>
<div class="frame"></div>
</body></html>
